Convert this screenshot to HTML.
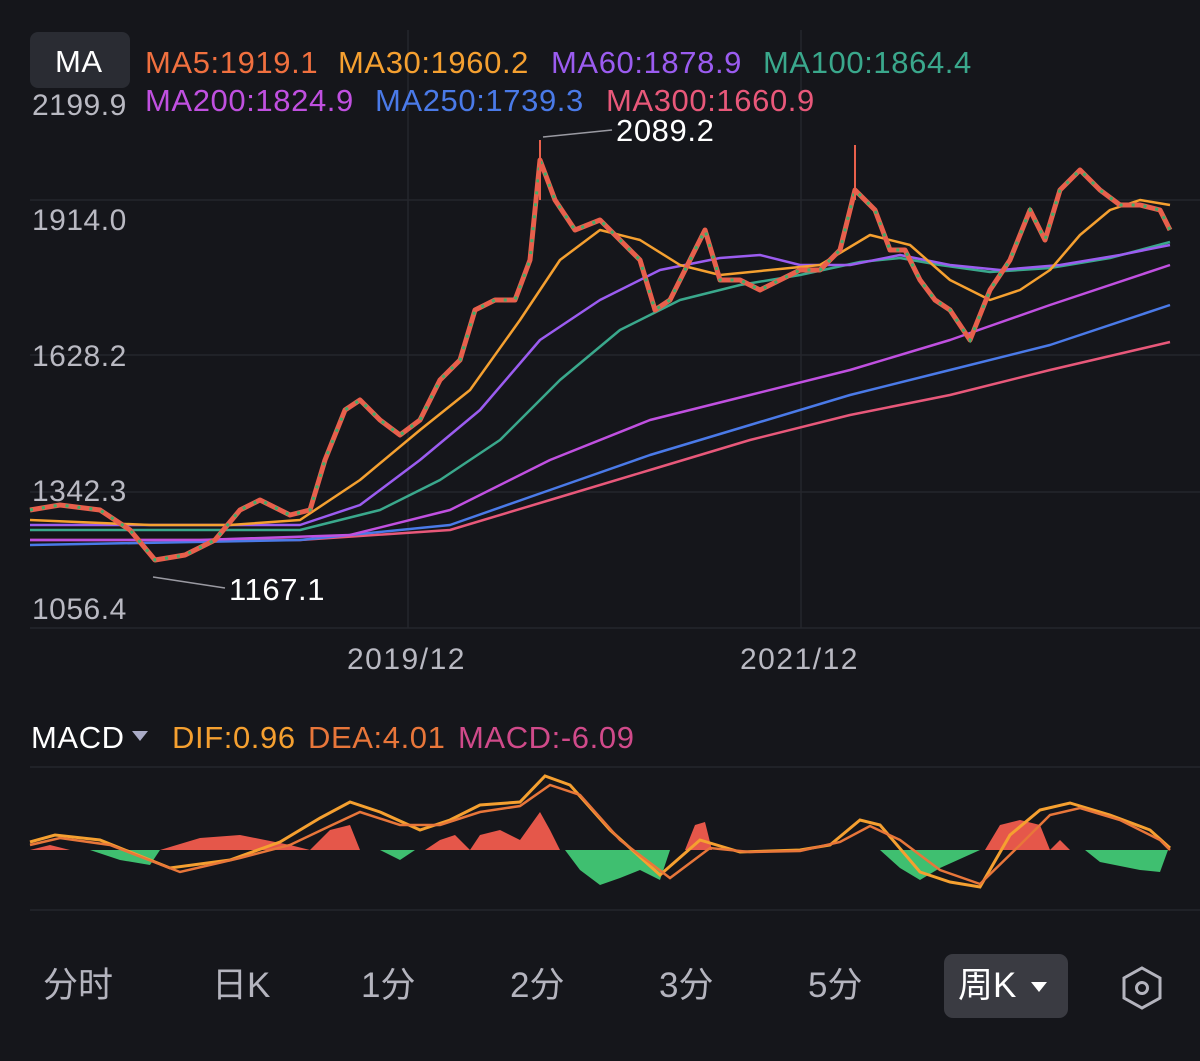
<!DOCTYPE html>
<html><head><meta charset="utf-8"><style>
html,body{margin:0;padding:0;background:#15161b;width:1200px;height:1061px;overflow:hidden;font-family:"Liberation Sans","Noto Sans CJK SC",sans-serif}
.t{position:absolute;font-size:31px;white-space:nowrap;line-height:1;letter-spacing:0.6px}
.y{position:absolute;left:32px;font-size:30px;color:#b9b9c2;line-height:1;letter-spacing:0.5px}
.tab{position:absolute;top:968px;font-size:35px;color:#b4b4be;line-height:1}
</style></head><body>
<svg width="1200" height="1061" style="position:absolute;left:0;top:0">
<g stroke="#25262c" stroke-width="1.5">
<line x1="30" y1="200" x2="1200" y2="200"/><line x1="30" y1="355" x2="1200" y2="355"/><line x1="30" y1="492" x2="1200" y2="492"/><line x1="30" y1="628" x2="1200" y2="628"/>
<line x1="408" y1="30" x2="408" y2="628"/><line x1="801" y1="30" x2="801" y2="628"/>
<line x1="30" y1="767" x2="1200" y2="767"/><line x1="30" y1="910" x2="1200" y2="910"/>
</g>
<g fill="none" stroke-width="2.5" stroke-linejoin="round">
<polyline stroke="#e8587a" points="30,540 300,540 450,530 550,500 650,470 750,440 850,415 950,395 1050,370 1170,342"/>
<polyline stroke="#4a7ae8" points="30,545 300,540 450,525 550,490 650,455 750,425 850,395 950,370 1050,345 1170,305"/>
<polyline stroke="#c050e0" points="30,540 200,540 350,535 450,510 550,460 650,420 750,395 850,370 950,340 1050,305 1170,265"/>
<polyline stroke="#3aa88c" points="30,530 300,530 380,510 440,480 500,440 560,380 620,330 680,300 740,285 800,275 860,262 900,258 940,265 990,272 1050,268 1110,258 1170,242"/>
<polyline stroke="#9b5cf0" points="30,525 200,525 300,525 360,505 420,460 480,410 540,340 600,300 660,270 720,258 760,255 800,265 850,265 900,255 950,265 1000,270 1060,265 1120,255 1170,245"/>
<polyline stroke="#f5a030" points="30,520 150,525 230,525 300,520 360,480 420,430 470,390 520,320 560,260 600,230 640,240 680,265 720,275 770,270 820,265 870,235 910,245 950,280 990,300 1020,290 1050,270 1080,235 1110,210 1140,200 1170,205"/>
</g>
<polyline fill="none" stroke="#e8604c" stroke-width="5" stroke-linejoin="round" points="30,510 60,505 100,510 130,530 155,560 185,555 215,540 240,510 260,500 290,515 310,510 325,460 345,410 360,400 380,420 400,435 420,420 440,380 460,360 475,310 495,300 515,300 530,260 540,160 555,200 575,230 600,220 620,240 640,260 655,310 670,300 690,260 705,230 720,280 740,280 760,290 780,280 800,270 820,270 840,250 855,190 875,210 890,250 905,250 920,280 935,300 950,310 970,340 990,290 1010,260 1030,210 1045,240 1060,190 1080,170 1100,190 1120,205 1140,205 1160,210 1170,230"/>
<polyline fill="none" stroke="#3fae6a" stroke-width="3" stroke-dasharray="3 9" points="30,510 60,505 100,510 130,530 155,560 185,555 215,540 240,510 260,500 290,515 310,510 325,460 345,410 360,400 380,420 400,435 420,420 440,380 460,360 475,310 495,300 515,300 530,260 540,160 555,200 575,230 600,220 620,240 640,260 655,310 670,300 690,260 705,230 720,280 740,280 760,290 780,280 800,270 820,270 840,250 855,190 875,210 890,250 905,250 920,280 935,300 950,310 970,340 990,290 1010,260 1030,210 1045,240 1060,190 1080,170 1100,190 1120,205 1140,205 1160,210 1170,230"/>
<line x1="540" y1="140" x2="540" y2="200" stroke="#e8604c" stroke-width="2"/>
<line x1="855" y1="145" x2="855" y2="200" stroke="#e8604c" stroke-width="2"/>
<polyline fill="none" stroke="#9a9aa2" stroke-width="1.5" points="543,137 612,130"/>
<polyline fill="none" stroke="#9a9aa2" stroke-width="1.5" points="153,577 225,588"/>
<g>
<polygon fill="#e5574a" points="30,850 50,845 70,850 160,850 200,838 240,835 290,845 310,850"/>
<polygon fill="#3fbf70" points="90,850 120,860 150,865 160,850"/>
<polygon fill="#e5574a" points="310,850 330,830 350,825 360,850"/>
<polygon fill="#3fbf70" points="380,850 400,860 415,850"/>
<polygon fill="#e5574a" points="425,850 440,840 455,835 470,850 480,835 500,830 520,840 540,812 550,830 560,850"/>
<polygon fill="#3fbf70" points="565,850 580,870 600,885 620,878 640,870 660,880 670,850"/>
<polygon fill="#e5574a" points="685,850 695,825 705,822 712,850"/>
<polygon fill="#3fbf70" points="880,850 900,868 920,880 940,868 980,850"/>
<polygon fill="#e5574a" points="985,850 1000,825 1020,820 1040,825 1050,850 1060,840 1070,850"/>
<polygon fill="#3fbf70" points="1085,850 1100,862 1120,866 1140,870 1160,872 1168,850"/>
</g>
<polyline fill="none" stroke="#f5a030" stroke-width="3" points="30,842 55,835 100,840 170,868 230,860 280,842 320,818 350,802 380,812 420,830 450,820 480,805 520,802 545,776 570,785 610,830 660,875 700,840 740,852 800,850 830,845 860,820 880,825 920,872 950,882 980,887 1010,835 1040,810 1070,803 1110,815 1150,830 1170,848"/>
<polyline fill="none" stroke="#e8763a" stroke-width="2.5" points="30,845 60,838 110,845 180,872 240,858 290,845 330,826 360,812 400,825 440,825 480,812 520,806 550,785 580,795 620,840 670,878 710,848 750,852 800,851 840,842 870,826 900,840 940,870 980,884 1020,845 1050,815 1080,808 1120,820 1160,840 1170,850"/>
<polygon points="132,731 148,731 140,741" fill="#a9abc6"/>
<rect x="944" y="954" width="124" height="64" rx="9" fill="#3a3b42"/>
<polygon points="1031,982 1047,982 1039,992" fill="#fff"/>
<polygon points="1142,968 1160,978 1160,998 1142,1008 1124,998 1124,978" fill="none" stroke="#b4b4be" stroke-width="3"/>
<circle cx="1142" cy="988" r="5.5" fill="none" stroke="#b4b4be" stroke-width="3"/>
<rect x="30" y="32" width="100" height="56" rx="8" fill="#2a2c33"/>
</svg>
<div class="t" style="left:55px;top:46px;color:#fff;font-size:31px">MA</div>
<div class="t" style="left:145px;top:47px;color:#f0703f">MA5:1919.1</div>
<div class="t" style="left:338px;top:47px;color:#f5a030">MA30:1960.2</div>
<div class="t" style="left:551px;top:47px;color:#9b5cf0">MA60:1878.9</div>
<div class="t" style="left:763px;top:47px;color:#3aa88c">MA100:1864.4</div>
<div class="t" style="left:145px;top:85px;color:#c050e0">MA200:1824.9</div>
<div class="t" style="left:375px;top:85px;color:#4a7ae8">MA250:1739.3</div>
<div class="t" style="left:606px;top:85px;color:#e8587a">MA300:1660.9</div>
<div class="y" style="top:91px">2199.9</div>
<div class="y" style="top:206px">1914.0</div>
<div class="y" style="top:342px">1628.2</div>
<div class="y" style="top:477px">1342.3</div>
<div class="y" style="top:595px">1056.4</div>
<div class="t" style="left:616px;top:115px;color:#fff">2089.2</div>
<div class="t" style="left:229px;top:574px;color:#fff">1167.1</div>
<div class="t" style="left:347px;top:645px;color:#b9b9c2;font-size:30px;letter-spacing:1.5px">2019/12</div>
<div class="t" style="left:740px;top:645px;color:#b9b9c2;font-size:30px;letter-spacing:1.5px">2021/12</div>
<div class="t" style="left:31px;top:722px;color:#fff">MACD</div>
<div class="t" style="left:172px;top:722px;color:#f5a030">DIF:0.96</div>
<div class="t" style="left:308px;top:722px;color:#e8763a">DEA:4.01</div>
<div class="t" style="left:458px;top:722px;color:#d04a8a">MACD:-6.09</div>
<div class="tab" style="left:43px">分时</div>
<div class="tab" style="left:212px">日K</div>
<div class="tab" style="left:361px">1分</div>
<div class="tab" style="left:510px">2分</div>
<div class="tab" style="left:659px">3分</div>
<div class="tab" style="left:808px">5分</div>
<div class="tab" style="left:958px;color:#fff">周K</div>
</body></html>
